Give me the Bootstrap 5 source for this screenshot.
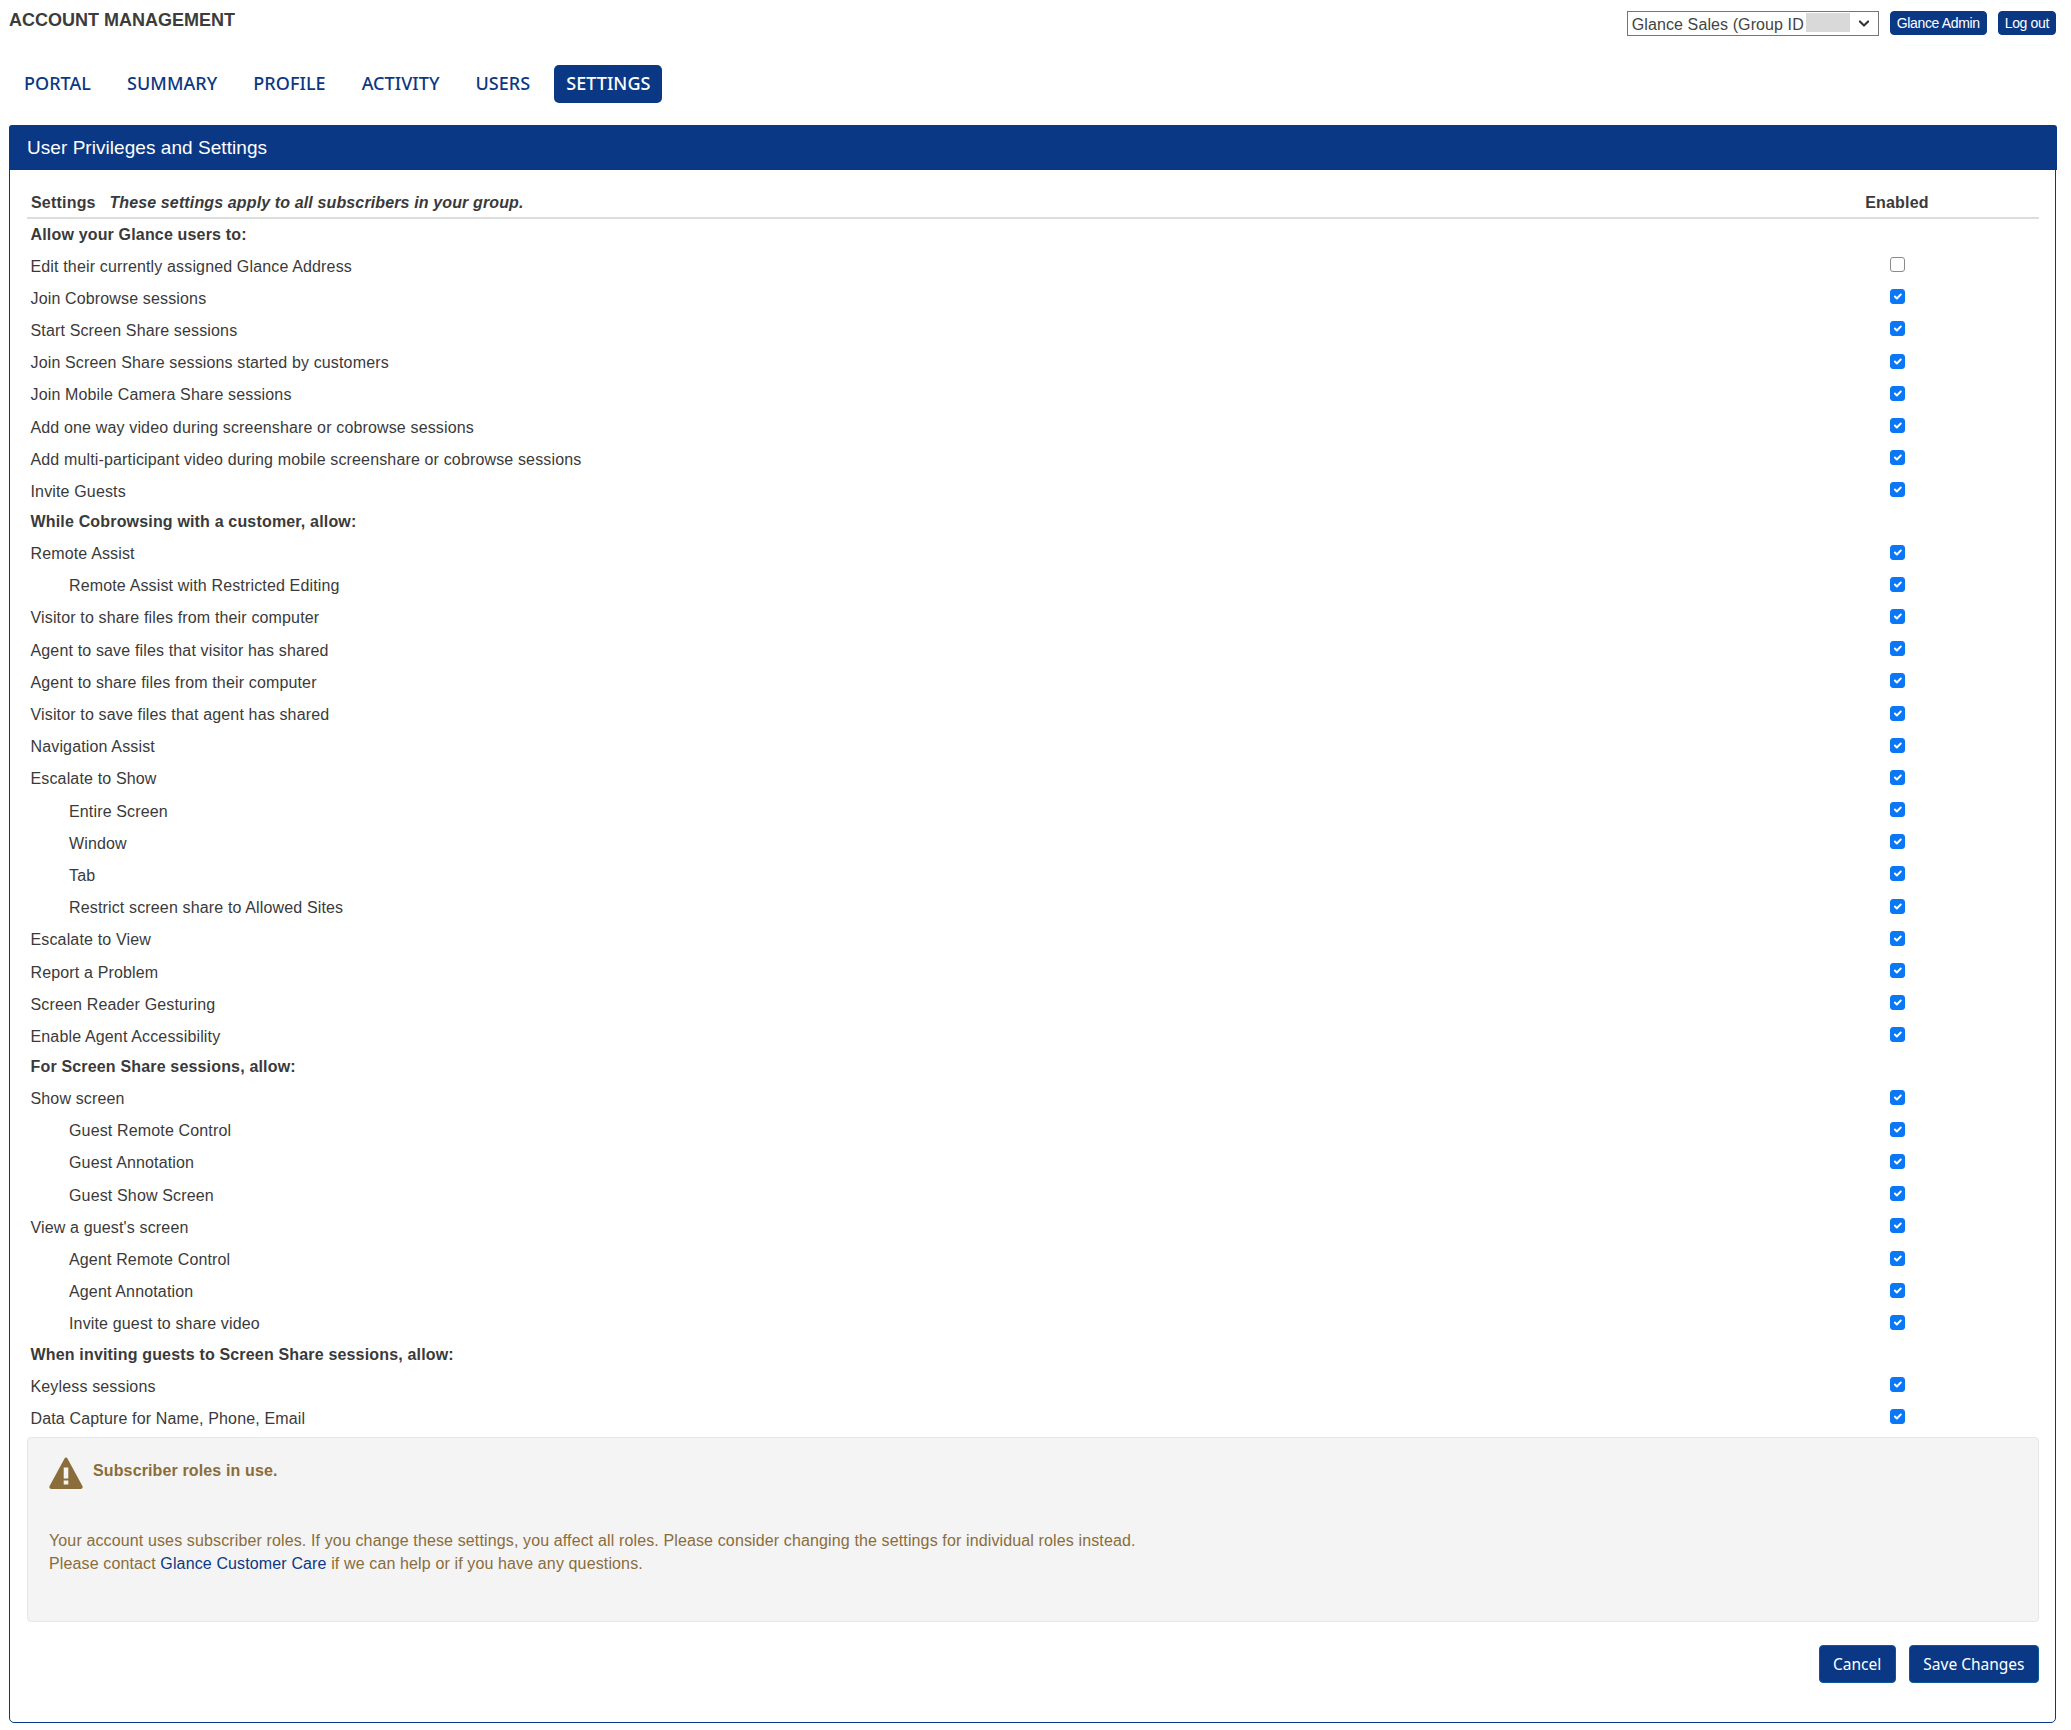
<!DOCTYPE html>
<html lang="en">
<head>
<meta charset="utf-8">
<title>Account Management</title>
<link href="https://cdn.jsdelivr.net/npm/bootstrap@5.3.0/dist/css/bootstrap.min.css" rel="stylesheet">
<style>
body { font-family: "Liberation Sans", Arial, sans-serif; font-size: 16px; color: #3a3a3a; background: #fff; letter-spacing: .15px; }
.page-wrap { padding: 0 15px 7px 9px; }
.top-bar { height: 65px; }
.page-title { font-size: 18px; font-weight: 700; color: #3c3c3c; margin: 11px 0 0; line-height: 19px; letter-spacing: 0; }
.group-select-wrap { width: 252px; height: 25px; margin-right: 11px; }
.group-select { height: 25px; padding: 2px 28px 0 4px; font-size: 16px; line-height: 22px; color: #444; border: 1px solid #767676; border-radius: 0; font-family: "Liberation Sans", Arial, sans-serif; letter-spacing: .1px; background-position: right 7px center; background-size: 14px 11px; background-image: url("data:image/svg+xml,%3csvg xmlns='http://www.w3.org/2000/svg' viewBox='0 0 16 16'%3e%3cpath fill='none' stroke='%23333' stroke-linecap='round' stroke-linejoin='round' stroke-width='3' d='m2 5 6 6 6-6'/%3e%3c/svg%3e"); }
.redact-block { position: absolute; top: 2px; left: 179px; width: 44px; height: 19px; background: #d9d9d9; }
.top-btn { height: 24px; padding: 0 6px; font-size: 14px; line-height: 22px; letter-spacing: -.35px; background: #0b3884; border: 1px solid #0b3884; color: #fff; border-radius: 4px; }
.top-btn.admin-btn { margin-right: 11px; }
.top-btn:hover { background: #0b3884; color: #fff; }
.main-nav { gap: 12px; margin: 0 0 22px 3px; letter-spacing: .05px; }
.main-nav .nav-link { height: 38px; padding: 0 12px; line-height: 36px; font-family: "Noto Sans", sans-serif; font-size: 18px; font-weight: 500; color: #0b3884; border-radius: 5px; }
.main-nav .nav-link.active { background: #0b3884; color: #fff; }
.priv-card { border: 1.5px solid #0b3884; border-radius: 5px; height: 1598px; }
.priv-head { background: #0b3884; color: #fff; height: 45px; padding: 0 18.5px; line-height: 46px; font-size: 19px; letter-spacing: .05px; border: 0; border-radius: 3px 3px 0 0 !important; margin: -1px -1.5px 0; }
.priv-body { padding: 0 16px 0 17px; }
.settings-top { height: 49px; margin-bottom: 1.5px; border-bottom: 2px solid #ddd; padding: 23px 0 0 4px; font-weight: 700; font-size: 16px; line-height: 20px; letter-spacing: .2px; }
.settings-top em { margin-left: 9px; letter-spacing: .13px; }
.enabled-col { width: 284px; flex: none; text-align: center; }
.enabled-col.check-cell { display: flex; justify-content: center; align-items: center; }
.set-row { height: 32.2px; padding-left: 3.5px; }
.set-row.sub { padding-left: 42px; }
.set-head { height: 30px; padding: 0 0 2px 3.5px; font-weight: 700; letter-spacing: .17px; }
.form-check-input.set-check { width: 15px; height: 15px; margin: -4px 0 0; border: 1px solid #8a8a8a; border-radius: 3px; }
.form-check-input.set-check:checked { background-color: #0a78f5; border-color: #0a78f5; }
.role-note { height: 185px; margin-top: 2px; background: #f4f4f4; border: 1px solid #e6e6e6; border-radius: 4px; padding: 19px 21px; color: #8a6d3b; letter-spacing: .13px; }
.note-title { font-weight: 700; margin: 4.5px 0 0 10px; line-height: 20px; }
.note-text { margin: 40px 0 0; line-height: 23px; }
.note-text a { color: #0b3884; text-decoration: none; }
.foot-btns { margin-top: 23px; gap: 13px; }
.foot-btn { height: 38px; padding: 0 13.5px; line-height: 36px; font-family: "Noto Sans", sans-serif; font-size: 15.5px; letter-spacing: 0; background: #0b3884; border: 1px solid #0b5a94; color: #fff; border-radius: 4px; }
.foot-btn:hover { background: #0b3884; color: #fff; }
</style>
</head>
<body>
<div class="page-wrap">
  <div class="top-bar d-flex justify-content-between align-items-start">
    <h1 class="page-title">ACCOUNT MANAGEMENT</h1>
    <div class="d-flex align-items-start" style="padding-top:11px">
      <div class="group-select-wrap position-relative">
        <select class="form-select group-select" aria-label="Group"><option>Glance Sales (Group ID 12345)</option></select>
        <span class="redact-block"></span>
      </div>
      <a href="#" class="btn top-btn admin-btn">Glance Admin</a>
      <a href="#" class="btn top-btn">Log out</a>
    </div>
  </div>
  <ul class="nav main-nav">
    <li class="nav-item"><a class="nav-link" href="#">PORTAL</a></li>
    <li class="nav-item"><a class="nav-link" href="#">SUMMARY</a></li>
    <li class="nav-item"><a class="nav-link" href="#">PROFILE</a></li>
    <li class="nav-item"><a class="nav-link" href="#">ACTIVITY</a></li>
    <li class="nav-item"><a class="nav-link" href="#">USERS</a></li>
    <li class="nav-item"><a class="nav-link active" href="#">SETTINGS</a></li>
  </ul>
  <div class="card priv-card">
    <div class="card-header priv-head">User Privileges and Settings</div>
    <div class="priv-body">
      <div class="settings-top d-flex justify-content-between">
        <div>Settings <em>These settings apply to all subscribers in your group.</em></div>
        <div class="enabled-col">Enabled</div>
      </div>

      <div class="set-head d-flex align-items-center">Allow your Glance users to:</div>
      <div class="set-row d-flex align-items-center justify-content-between"><span>Edit their currently assigned Glance Address</span><span class="enabled-col check-cell"><input class="form-check-input set-check" type="checkbox"></span></div>
      <div class="set-row d-flex align-items-center justify-content-between"><span>Join Cobrowse sessions</span><span class="enabled-col check-cell"><input class="form-check-input set-check" type="checkbox" checked></span></div>
      <div class="set-row d-flex align-items-center justify-content-between"><span>Start Screen Share sessions</span><span class="enabled-col check-cell"><input class="form-check-input set-check" type="checkbox" checked></span></div>
      <div class="set-row d-flex align-items-center justify-content-between"><span>Join Screen Share sessions started by customers</span><span class="enabled-col check-cell"><input class="form-check-input set-check" type="checkbox" checked></span></div>
      <div class="set-row d-flex align-items-center justify-content-between"><span>Join Mobile Camera Share sessions</span><span class="enabled-col check-cell"><input class="form-check-input set-check" type="checkbox" checked></span></div>
      <div class="set-row d-flex align-items-center justify-content-between"><span>Add one way video during screenshare or cobrowse sessions</span><span class="enabled-col check-cell"><input class="form-check-input set-check" type="checkbox" checked></span></div>
      <div class="set-row d-flex align-items-center justify-content-between"><span>Add multi-participant video during mobile screenshare or cobrowse sessions</span><span class="enabled-col check-cell"><input class="form-check-input set-check" type="checkbox" checked></span></div>
      <div class="set-row d-flex align-items-center justify-content-between"><span>Invite Guests</span><span class="enabled-col check-cell"><input class="form-check-input set-check" type="checkbox" checked></span></div>

      <div class="set-head d-flex align-items-center">While Cobrowsing with a customer, allow:</div>
      <div class="set-row d-flex align-items-center justify-content-between"><span>Remote Assist</span><span class="enabled-col check-cell"><input class="form-check-input set-check" type="checkbox" checked></span></div>
      <div class="set-row sub d-flex align-items-center justify-content-between"><span>Remote Assist with Restricted Editing</span><span class="enabled-col check-cell"><input class="form-check-input set-check" type="checkbox" checked></span></div>
      <div class="set-row d-flex align-items-center justify-content-between"><span>Visitor to share files from their computer</span><span class="enabled-col check-cell"><input class="form-check-input set-check" type="checkbox" checked></span></div>
      <div class="set-row d-flex align-items-center justify-content-between"><span>Agent to save files that visitor has shared</span><span class="enabled-col check-cell"><input class="form-check-input set-check" type="checkbox" checked></span></div>
      <div class="set-row d-flex align-items-center justify-content-between"><span>Agent to share files from their computer</span><span class="enabled-col check-cell"><input class="form-check-input set-check" type="checkbox" checked></span></div>
      <div class="set-row d-flex align-items-center justify-content-between"><span>Visitor to save files that agent has shared</span><span class="enabled-col check-cell"><input class="form-check-input set-check" type="checkbox" checked></span></div>
      <div class="set-row d-flex align-items-center justify-content-between"><span>Navigation Assist</span><span class="enabled-col check-cell"><input class="form-check-input set-check" type="checkbox" checked></span></div>
      <div class="set-row d-flex align-items-center justify-content-between"><span>Escalate to Show</span><span class="enabled-col check-cell"><input class="form-check-input set-check" type="checkbox" checked></span></div>
      <div class="set-row sub d-flex align-items-center justify-content-between"><span>Entire Screen</span><span class="enabled-col check-cell"><input class="form-check-input set-check" type="checkbox" checked></span></div>
      <div class="set-row sub d-flex align-items-center justify-content-between"><span>Window</span><span class="enabled-col check-cell"><input class="form-check-input set-check" type="checkbox" checked></span></div>
      <div class="set-row sub d-flex align-items-center justify-content-between"><span>Tab</span><span class="enabled-col check-cell"><input class="form-check-input set-check" type="checkbox" checked></span></div>
      <div class="set-row sub d-flex align-items-center justify-content-between"><span>Restrict screen share to Allowed Sites</span><span class="enabled-col check-cell"><input class="form-check-input set-check" type="checkbox" checked></span></div>
      <div class="set-row d-flex align-items-center justify-content-between"><span>Escalate to View</span><span class="enabled-col check-cell"><input class="form-check-input set-check" type="checkbox" checked></span></div>
      <div class="set-row d-flex align-items-center justify-content-between"><span>Report a Problem</span><span class="enabled-col check-cell"><input class="form-check-input set-check" type="checkbox" checked></span></div>
      <div class="set-row d-flex align-items-center justify-content-between"><span>Screen Reader Gesturing</span><span class="enabled-col check-cell"><input class="form-check-input set-check" type="checkbox" checked></span></div>
      <div class="set-row d-flex align-items-center justify-content-between"><span>Enable Agent Accessibility</span><span class="enabled-col check-cell"><input class="form-check-input set-check" type="checkbox" checked></span></div>

      <div class="set-head d-flex align-items-center">For Screen Share sessions, allow:</div>
      <div class="set-row d-flex align-items-center justify-content-between"><span>Show screen</span><span class="enabled-col check-cell"><input class="form-check-input set-check" type="checkbox" checked></span></div>
      <div class="set-row sub d-flex align-items-center justify-content-between"><span>Guest Remote Control</span><span class="enabled-col check-cell"><input class="form-check-input set-check" type="checkbox" checked></span></div>
      <div class="set-row sub d-flex align-items-center justify-content-between"><span>Guest Annotation</span><span class="enabled-col check-cell"><input class="form-check-input set-check" type="checkbox" checked></span></div>
      <div class="set-row sub d-flex align-items-center justify-content-between"><span>Guest Show Screen</span><span class="enabled-col check-cell"><input class="form-check-input set-check" type="checkbox" checked></span></div>
      <div class="set-row d-flex align-items-center justify-content-between"><span>View a guest's screen</span><span class="enabled-col check-cell"><input class="form-check-input set-check" type="checkbox" checked></span></div>
      <div class="set-row sub d-flex align-items-center justify-content-between"><span>Agent Remote Control</span><span class="enabled-col check-cell"><input class="form-check-input set-check" type="checkbox" checked></span></div>
      <div class="set-row sub d-flex align-items-center justify-content-between"><span>Agent Annotation</span><span class="enabled-col check-cell"><input class="form-check-input set-check" type="checkbox" checked></span></div>
      <div class="set-row sub d-flex align-items-center justify-content-between"><span>Invite guest to share video</span><span class="enabled-col check-cell"><input class="form-check-input set-check" type="checkbox" checked></span></div>

      <div class="set-head d-flex align-items-center">When inviting guests to Screen Share sessions, allow:</div>
      <div class="set-row d-flex align-items-center justify-content-between"><span>Keyless sessions</span><span class="enabled-col check-cell"><input class="form-check-input set-check" type="checkbox" checked></span></div>
      <div class="set-row d-flex align-items-center justify-content-between"><span>Data Capture for Name, Phone, Email</span><span class="enabled-col check-cell"><input class="form-check-input set-check" type="checkbox" checked></span></div>

      <div class="role-note">
        <div class="d-flex align-items-start">
          <svg width="34" height="32" viewBox="0 0 34 32" aria-hidden="true"><path fill="#8a6d3b" fill-rule="evenodd" d="M17 0.500c.700 0 1.200.400 1.600 1.200l14.800 27.300c.700 1.400 0 3-1.700 3H2.300C.600 32-.100 30.400.600 29L15.400 1.700C15.800.900 16.300.500 17 .500zM14.700 10.500v11h4.600v-11h-4.600zm0 13v4h4.600v-4h-4.600z"/></svg>
          <div class="note-title">Subscriber roles in use.</div>
        </div>
        <p class="note-text">Your account uses subscriber roles. If you change these settings, you affect all roles. Please consider changing the settings for individual roles instead.<br>Please contact <a href="#">Glance Customer Care</a> if we can help or if you have any questions.</p>
      </div>
      <div class="foot-btns d-flex justify-content-end">
        <button type="button" class="btn foot-btn">Cancel</button>
        <button type="button" class="btn foot-btn">Save Changes</button>
      </div>
    </div>
  </div>
</div>
<script src="https://cdn.jsdelivr.net/npm/bootstrap@5.3.0/dist/js/bootstrap.bundle.min.js"></script>
</body>
</html>
